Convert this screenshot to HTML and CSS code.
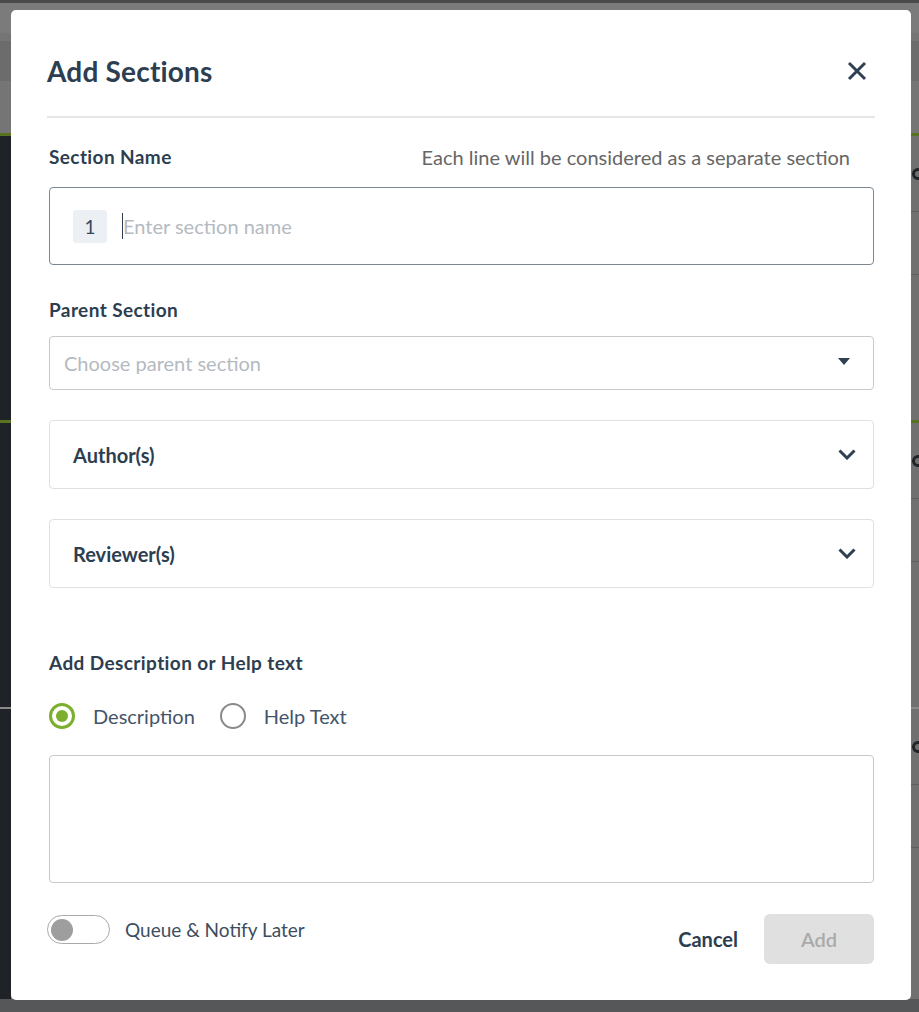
FILE: index.html
```html
<!DOCTYPE html>
<html lang="en">
<head>
    <meta charset="UTF-8">
    <meta name="viewport" content="width=device-width, initial-scale=1.0">
    <title>Add Sections</title>
    <link rel="stylesheet" href="styles.css">
</head>
<body>
    <!-- dimmed page behind the dialog -->
    <div class="backdrop">
        <div class="topbar"></div>
        <div class="page-header">
            <div class="header-band"></div>
            <div class="header-tool"></div>
        </div>
        <div class="page-row">
            <div class="row-side"></div>
            <div class="row-main">
                <div class="row-head"><span class="row-mark"></span></div>
                <div class="row-sub"></div>
            </div>
        </div>
        <div class="page-row">
            <div class="row-side"></div>
            <div class="row-main">
                <div class="row-head"><span class="row-mark"></span></div>
                <div class="row-sub"></div>
            </div>
        </div>
        <div class="page-row last">
            <div class="row-side"></div>
            <div class="row-main">
                <div class="row-head"><span class="row-mark"></span></div>
                <div class="row-sub"></div>
            </div>
        </div>
        <div class="page-footer"></div>
    </div>

    <div class="modal">
        <div class="modal-header">
            <h2 class="modal-title">Add Sections</h2>
            <button class="close-button" aria-label="Close">
                <svg width="20" height="20" viewBox="0 0 20 20">
                    <path d="M2 2 L18 18 M18 2 L2 18" stroke="#2f4052" stroke-width="3" fill="none"/>
                </svg>
            </button>
        </div>

        <div class="modal-body">
            <div class="label-row">
                <label class="field-label">Section Name</label>
                <span class="field-hint">Each line will be considered as a separate section</span>
            </div>
            <div class="lines-input">
                <span class="line-number">1</span>
                <span class="caret"></span>
                <span class="placeholder">Enter section name</span>
            </div>

            <label class="field-label parent-label">Parent Section</label>
            <div class="select-box">
                <span class="placeholder">Choose parent section</span>
                <svg width="12" height="7" viewBox="0 0 12 7">
                    <polygon points="0,0 12,0 6,7" fill="#2f4052"/>
                </svg>
            </div>

            <div class="collapse-box">
                <span class="collapse-title">Author(s)</span>
                <svg width="18" height="11" viewBox="0 0 18 11">
                    <path d="M1.5 1.5 L9 9 L16.5 1.5" stroke="#2f4052" stroke-width="3" fill="none"/>
                </svg>
            </div>
            <div class="collapse-box">
                <span class="collapse-title">Reviewer(s)</span>
                <svg width="18" height="11" viewBox="0 0 18 11">
                    <path d="M1.5 1.5 L9 9 L16.5 1.5" stroke="#2f4052" stroke-width="3" fill="none"/>
                </svg>
            </div>

            <label class="field-label desc-label">Add Description or Help text</label>
            <div class="radio-group">
                <label class="radio checked"><span class="radio-dot"></span>Description</label>
                <label class="radio"><span class="radio-dot"></span>Help Text</label>
            </div>
            <div class="text-area"></div>
        </div>

        <div class="modal-footer">
            <div class="toggle-wrap">
                <span class="toggle"><span class="toggle-knob"></span></span>
                <span class="toggle-label">Queue &amp; Notify Later</span>
            </div>
            <div class="actions">
                <button class="cancel-button">Cancel</button>
                <button class="add-button" disabled>Add</button>
            </div>
        </div>
    </div>
</body>
</html>
```

FILE: styles.css
```css
* {
    margin: 0;
    padding: 0;
    box-sizing: border-box;
}

body {
    font-family: 'Lato', 'Liberation Sans', sans-serif;
    width: 919px;
    height: 1012px;
    overflow: hidden;
    background: #555759;
    color: #2c3e50;
}

/* ---------- dimmed page ---------- */

.backdrop {
    display: flex;
    flex-direction: column;
    height: 100%;
}

.topbar {
    height: 3px;
    background: #4a4a4a;
}

.page-header {
    height: 130px;
    background: #757575;
    display: flex;
    flex-direction: column;
}

.header-band {
    height: 30px;
    background: #7b7b7b;
}

.header-tool {
    height: 40px;
    margin-top: 8px;
    background: #6c6c6c;
}

.page-row {
    display: flex;
    height: 287px;
    border-top: 3px solid #58731f;
}

.page-row.last {
    height: 292px;
    border-top: 2px solid #8a8a8a;
}

.row-side {
    width: 11px;
    background: #1f2327;
}

.row-main {
    flex: 1;
    background: #707070;
}

.row-head {
    height: 76px;
    border-bottom: 1px solid #5e5e5e;
    display: flex;
    align-items: center;
    justify-content: flex-end;
    overflow: hidden;
}

.row-mark {
    width: 12px;
    height: 12px;
    border: 3px solid #1f2327;
    border-radius: 50%;
    margin-right: -5px;
}

.row-sub {
    height: 63px;
    border-bottom: 1px solid #5e5e5e;
}

.page-footer {
    flex: 1;
    background: #555759;
}

/* ---------- modal ---------- */

.modal {
    position: fixed;
    top: 10px;
    left: 11px;
    width: 900px;
    height: 990px;
    background: #fff;
    border-radius: 5px;
    padding: 44px 36px 36px;
    display: flex;
    flex-direction: column;
}

.modal-header {
    display: flex;
    align-items: center;
    justify-content: space-between;
    padding-bottom: 28px;
    border-bottom: 2px solid #e6e6e6;
}

.modal-title {
    font-size: 28px;
    font-weight: 700;
    line-height: 34px;
    letter-spacing: 0.2px;
    color: #2c3e50;
}

.close-button {
    background: none;
    border: none;
    width: 20px;
    height: 20px;
    margin-right: 8px;
    cursor: pointer;
    display: flex;
}

.modal-body {
    padding: 27px 1px 0 2px;
    display: flex;
    flex-direction: column;
}

.label-row {
    display: flex;
    justify-content: space-between;
    align-items: center;
    height: 24px;
}

.field-label {
    display: block;
    font-size: 19px;
    font-weight: 700;
    line-height: 24px;
    letter-spacing: 0.4px;
    color: #2c3e50;
}

.field-hint {
    font-size: 20px;
    line-height: 24px;
    color: #666;
    margin-right: 24px;
}

.lines-input {
    margin-top: 18px;
    height: 78px;
    border: 1px solid #7d8790;
    border-radius: 4px;
    display: flex;
    align-items: center;
    padding-left: 23px;
}

.line-number {
    width: 34px;
    height: 33px;
    border-radius: 3px;
    background: #eceff3;
    display: flex;
    align-items: center;
    justify-content: center;
    font-size: 19px;
    color: #34495e;
}

.caret {
    width: 1px;
    height: 26px;
    background: #2c3e50;
    margin-left: 15px;
}

.placeholder {
    font-size: 20px;
    color: #b4bac1;
}

.parent-label {
    margin-top: 33px;
}

.select-box {
    margin-top: 14px;
    height: 54px;
    border: 1px solid #c9c9c9;
    border-radius: 4px;
    display: flex;
    align-items: center;
    justify-content: space-between;
    padding: 0 23px 0 14px;
}

.select-box svg {
    margin-bottom: 4px;
}

.collapse-box {
    margin-top: 30px;
    height: 69px;
    border: 1px solid #e0e0e0;
    border-radius: 4px;
    display: flex;
    align-items: center;
    justify-content: space-between;
    padding: 0 17px 0 23px;
}

.collapse-title {
    font-size: 20px;
    font-weight: 700;
    color: #2c3e50;
}

.desc-label {
    margin-top: 63px;
}

.radio-group {
    margin-top: 26px;
    display: flex;
    align-items: center;
    gap: 25px;
    height: 30px;
}

.radio {
    display: flex;
    align-items: center;
    font-size: 20px;
    color: #44546a;
    cursor: pointer;
}

.radio-dot {
    width: 26px;
    height: 26px;
    border-radius: 50%;
    border: 2.5px solid #8a8a8a;
    margin-right: 18px;
    display: flex;
    align-items: center;
    justify-content: center;
}

.radio.checked .radio-dot {
    border: 3px solid #7cb02c;
}

.radio.checked .radio-dot::after {
    content: "";
    width: 12px;
    height: 12px;
    border-radius: 50%;
    background: #7cb02c;
}

.text-area {
    margin-top: 24px;
    height: 128px;
    border: 1px solid #c9c9c9;
    border-radius: 4px;
}

.modal-footer {
    margin-top: 31px;
    display: flex;
    justify-content: space-between;
    align-items: flex-start;
    padding-right: 1px;
}

.toggle-wrap {
    display: flex;
    align-items: center;
    gap: 15px;
    margin-top: 1px;
}

.toggle {
    width: 63px;
    height: 29px;
    border: 1px solid #aaa;
    border-radius: 15px;
    display: flex;
    align-items: center;
    padding-left: 3px;
}

.toggle-knob {
    width: 22px;
    height: 22px;
    border-radius: 50%;
    background: #9e9e9e;
}

.toggle-label {
    font-size: 19px;
    color: #3d4d60;
}

.actions {
    display: flex;
    align-items: center;
    gap: 26px;
}

.cancel-button {
    background: none;
    border: none;
    font-family: inherit;
    font-size: 20px;
    font-weight: 700;
    color: #2c3e50;
    cursor: pointer;
}

.add-button {
    width: 110px;
    height: 50px;
    border: none;
    border-radius: 6px;
    background: #e0e0e0;
    font-family: inherit;
    font-size: 20px;
    font-weight: 600;
    color: #aaa;
}
```
